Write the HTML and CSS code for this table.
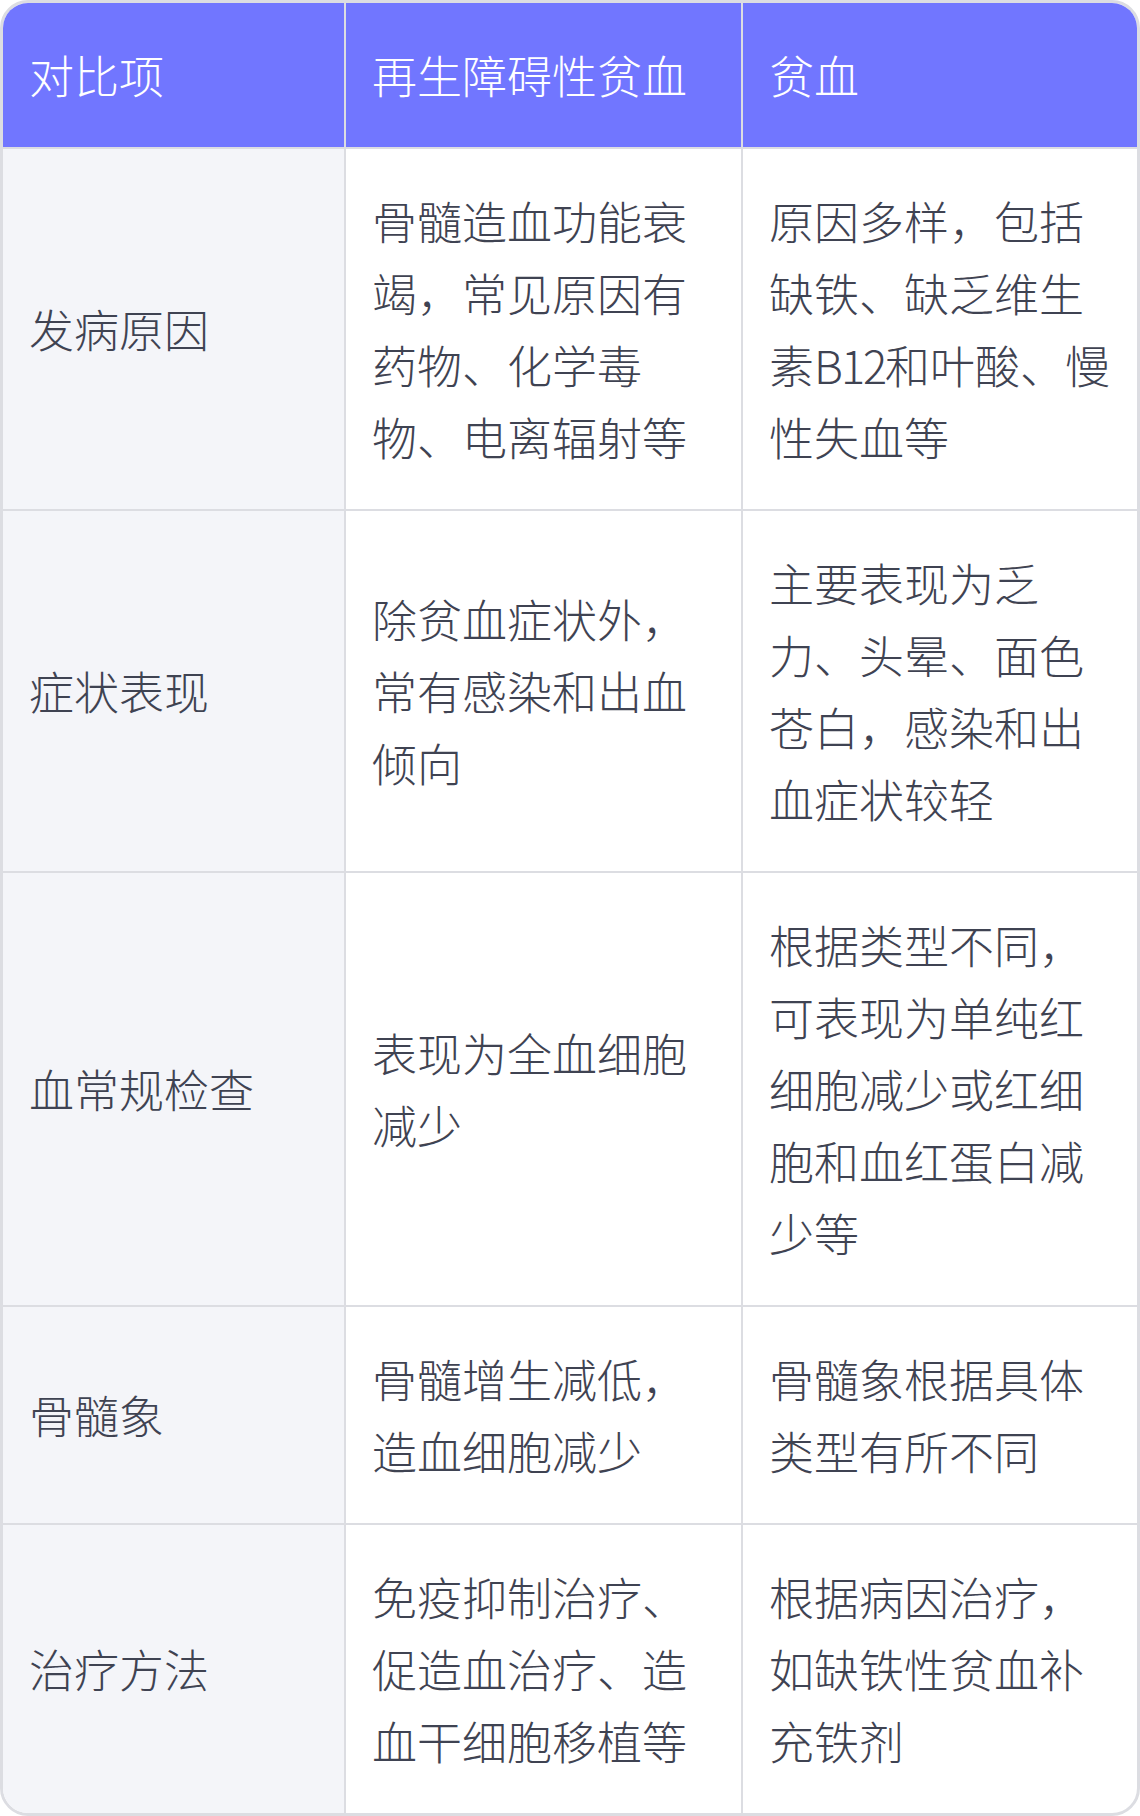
FILE: index.html
```html
<!DOCTYPE html>
<html lang="zh-CN">
<head>
<meta charset="utf-8">
<link rel="stylesheet" href="styles.css">
</head>
<body>
<div class="card">
  <table class="cmp">
    <colgroup>
      <col class="c1">
      <col class="c2">
      <col class="c3">
    </colgroup>
    <thead>
      <tr><th>对比项</th><th>再生障碍性贫血</th><th>贫血</th></tr>
    </thead>
    <tbody>
      <tr><td>发病原因</td><td>骨髓造血功能衰竭，常见原因有药物、化学毒物、电离辐射等</td><td>原因多样，包括缺铁、缺乏维生素<span class="lat">B12</span>和叶酸、慢性失血等</td></tr>
      <tr><td>症状表现</td><td>除贫血症状外，常有感染和出血倾向</td><td>主要表现为乏力、头晕、面色苍白，感染和出血症状较轻</td></tr>
      <tr><td>血常规检查</td><td>表现为全血细胞减少</td><td>根据类型不同，可表现为单纯红细胞减少或红细胞和血红蛋白减少等</td></tr>
      <tr><td>骨髓象</td><td>骨髓增生减低，造血细胞减少</td><td>骨髓象根据具体类型有所不同</td></tr>
      <tr><td>治疗方法</td><td>免疫抑制治疗、促造血治疗、造血干细胞移植等</td><td>根据病因治疗，如缺铁性贫血补充铁剂</td></tr>
    </tbody>
  </table>
</div>
</body>
</html>
```
FILE: styles.css
```css
html, body {
  margin: 0;
  padding: 0;
  background: #ffffff;
}
body {
  font-family: "Noto Sans CJK SC", "Noto Sans", sans-serif;
  font-weight: 300;
}
.card {
  width: 1140px;
  height: 1816px;
  box-sizing: border-box;
  border: 3px solid #dcdde2;
  border-radius: 28px;
  overflow: hidden;
  background: #ffffff;
}
.cmp {
  width: 100%;
  border-collapse: collapse;
  table-layout: fixed;
}
.c1 { width: 342px; }
.c2 { width: 397px; }
.c3 { width: 395px; }
.cmp th,
.cmp td {
  font-size: 45px;
  line-height: 72px;
  padding: 36px 26px;
  text-align: left;
  vertical-align: middle;
  border: 2px solid #dcdde2;
  word-break: break-all;
}
.cmp tr > :first-child { border-left: none; }
.cmp tr > :last-child { border-right: none; }
.cmp thead th {
  border-top: none;
  background: #7176ff;
  color: #ffffff;
  font-weight: 300;
}
.cmp tbody tr:last-child td { border-bottom: none; }
.cmp td {
  color: #3f4352;
}
.cmp td:first-child {
  background: #f4f5f9;
}
.lat {
  letter-spacing: -2px;
}
```
